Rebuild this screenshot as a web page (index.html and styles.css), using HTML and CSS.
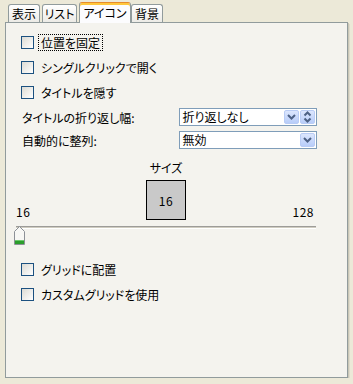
FILE: index.html
```html
<!DOCTYPE html>
<html lang="ja">
<head>
    <meta charset="UTF-8">
    <title>アイコン</title>
    <link rel="stylesheet" href="styles.css">
</head>
<body>
    <div class="dialog">
        <div class="tabs">
            <div class="tab tab-view">表示</div>
            <div class="tab tab-list">リスト</div>
            <div class="tab tab-icon active">アイコン</div>
            <div class="tab tab-bg">背景</div>
        </div>

        <div class="panel">
            <div class="check"><span class="box"></span><span class="check-text focus">位置を固定</span></div>
            <div class="check"><span class="box"></span><span class="check-text">シングルクリックで開く</span></div>
            <div class="check"><span class="box"></span><span class="check-text">タイトルを隠す</span></div>

            <div class="field">
                <span class="field-label">タイトルの折り返し幅:</span>
                <div class="combo">
                    <span class="combo-value">折り返しなし</span>
                    <span class="btn drop">
                        <svg width="9" height="6" viewBox="0 0 9 6"><path d="M1 1 L4.5 4.5 L8 1" fill="none" stroke="#4D6185" stroke-width="2"/></svg>
                    </span>
                    <span class="btn spin">
                        <svg width="9" height="12" viewBox="0 0 9 12"><path d="M1.5 4.5 L4.5 1.5 L7.5 4.5 M1.5 7.5 L4.5 10.5 L7.5 7.5" fill="none" stroke="#4D6185" stroke-width="2"/></svg>
                    </span>
                </div>
            </div>
            <div class="field">
                <span class="field-label">自動的に整列:</span>
                <div class="combo">
                    <span class="combo-value">無効</span>
                    <span class="btn drop">
                        <svg width="9" height="6" viewBox="0 0 9 6"><path d="M1 1 L4.5 4.5 L8 1" fill="none" stroke="#4D6185" stroke-width="2"/></svg>
                    </span>
                </div>
            </div>

            <div class="size">
                <span class="size-min">16</span>
                <div class="size-center">
                    <div class="size-label">サイズ</div>
                    <div class="preview">16</div>
                </div>
                <span class="size-max">128</span>
            </div>
            <div class="slider">
                <div class="track"></div>
                <svg class="thumb" width="11" height="19" viewBox="0 0 11 19">
                    <path d="M0.5 18.5 V5.5 L5.5 0.5 L10.5 5.5 V18.5 Z" fill="#F7F7F4" stroke="#8C9096"/>
                    <rect x="1" y="15" width="9" height="3" fill="#2C9E2C"/>
                    <rect x="1" y="14" width="9" height="1" fill="#6CC86C"/>
                </svg>
            </div>

            <div class="check grid-first"><span class="box"></span><span class="check-text">グリッドに配置</span></div>
            <div class="check"><span class="box"></span><span class="check-text">カスタムグリッドを使用</span></div>
        </div>
    </div>
</body>
</html>
```

FILE: styles.css
```css
body {
    margin: 0;
    background-color: #ECE9D8;
    font-family: "Noto Sans CJK JP", sans-serif;
    font-size: 12px;
    color: #000;
    font-feature-settings: "palt";
}

.dialog {
    padding-left: 5px;
    width: 343px;
}

.tabs {
    display: flex;
    align-items: flex-end;
    height: 22px;
    padding-left: 3px;
}

.tab {
    box-sizing: border-box;
    height: 18px;
    border: 1px solid #919B9C;
    border-bottom: none;
    border-radius: 3px 3px 0 0;
    background: linear-gradient(#FFFFFF, #ECEBE6);
    text-align: center;
    line-height: 15px;
    padding-top: 1px;
}

.tab-view {
    width: 32px;
    margin-right: 2px;
}

.tab-list {
    width: 35px;
}

.tab-icon {
    width: 52px;
    margin-left: 2px;
}

.tab-bg {
    width: 32px;
}

.tab.active {
    position: relative;
    z-index: 1;
    height: 21px;
    margin-bottom: -1px;
    padding-top: 2px;
    background: #FCFCFE;
    border-top: 1px solid #E68B2C;
    box-shadow: inset 0 2px 0 #FFC73C;
}

.panel {
    box-sizing: border-box;
    height: 356px;
    border: 1px solid #919B9C;
    background-color: #F4F3EE;
    padding: 11px 30px 0 9px;
    box-shadow: 1px 1px 0 #C9C6B6, 2px 2px 0 #DEDBCC;
}

.check {
    display: flex;
    align-items: center;
    height: 17px;
    padding-left: 6px;
    margin-bottom: 8px;
}

.box {
    box-sizing: border-box;
    width: 13px;
    height: 13px;
    border: 1px solid #1C5180;
    background: linear-gradient(135deg, #DCDBD4, #FFFFFF);
}

.check-text {
    margin-left: 4px;
    padding: 0 2px;
    border: 1px dotted transparent;
    line-height: 15px;
}

.check-text.focus {
    border-color: #000;
}

.field {
    display: flex;
    align-items: center;
    height: 18px;
    padding-left: 7px;
    margin-top: -1px;
    margin-bottom: 6px;
}

.field-label {
    width: 158px;
}

.combo {
    box-sizing: border-box;
    display: flex;
    align-items: center;
    width: 138px;
    height: 18px;
    border: 1px solid #7F9DB9;
    background-color: #fff;
    padding: 0 1px 0 2px;
}

.combo-value {
    flex: 1;
    line-height: 14px;
}

.btn {
    box-sizing: border-box;
    display: flex;
    align-items: center;
    justify-content: center;
    width: 15px;
    height: 14px;
    border: 1px solid #B9CCF5;
    border-radius: 2px;
    background: linear-gradient(#DCE6FD, #B8CDF9);
}

.drop + .spin {
    margin-left: 1px;
}

.size {
    display: grid;
    grid-template-columns: 1fr auto 1fr;
    align-items: end;
    margin-top: 12px;
}

.size-min,
.size-max {
    line-height: 14px;
    margin-bottom: 1px;
    letter-spacing: 0.5px;
}

.size-min {
    padding-left: 1px;
}

.size-max {
    justify-self: end;
    padding-right: 3px;
}

.size-center {
    display: flex;
    flex-direction: column;
    align-items: center;
}

.size-label {
    line-height: 14px;
}

.preview {
    box-sizing: border-box;
    width: 40px;
    height: 40px;
    margin-top: 5px;
    border: 1px solid #000;
    background-color: #C9C9C9;
    display: flex;
    align-items: center;
    justify-content: center;
    letter-spacing: 0.5px;
}

.slider {
    position: relative;
    height: 19px;
    margin-top: 3px;
}

.track {
    height: 1px;
    margin: 6px 1px 0;
    border-top: 1px solid #9D9C99;
    border-bottom: 1px solid #FFFFFF;
    background-color: #CFCCC0;
}

.thumb {
    position: absolute;
    left: -1px;
    top: 0;
}

.grid-first {
    margin-top: 16px;
}
```
